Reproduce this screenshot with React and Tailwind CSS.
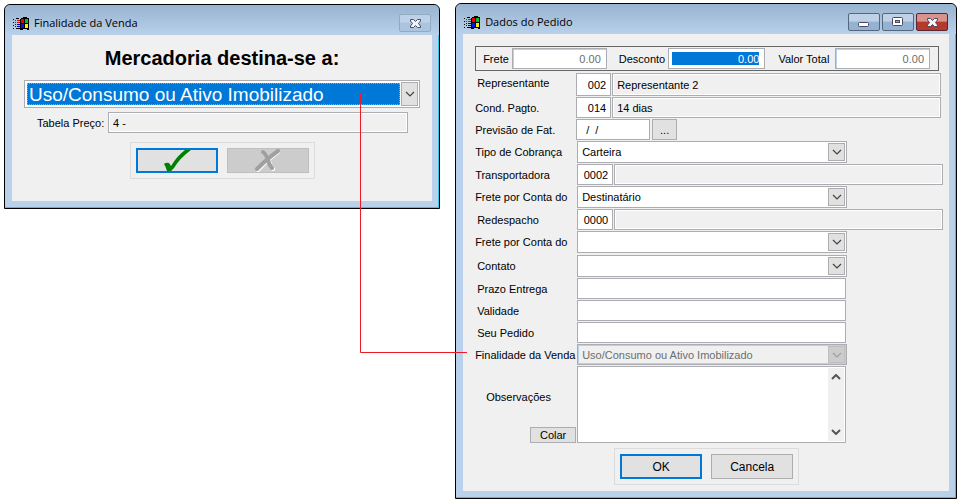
// App.jsx
import React, { useState } from 'react';
import clsx from 'clsx';

const WindowsFlag = () => (
  <svg className="shrink-0" width="17" height="15" viewBox="0 0 17 15" shapeRendering="crispEdges" aria-hidden="true">
    <path d="M8 2h2V1h4v1h2v12h-2v-1h-4v1H7V3h1z" fill="#000" />
    <path d="M8 3h3v4H8z" fill="#e8000d" />
    <path d="M12 3h3v4h-3z" fill="#00c020" />
    <path d="M8 8h3v4H8z" fill="#0018f0" />
    <path d="M12 8h3v4h-3z" fill="#ffee00" />
    <path d="M0 3h1v1H0zM0 6h1v1H0zM0 9h1v1H0zM0 12h1v1H0zM3 2h3v1H3zM3 12h4v1H3z" fill="#000" />
    <path d="M2 4h1v1H2zM4 4h3v1H4zM2 6h1v1H2zM4 6h3v1H4z" fill="#f00000" />
    <path d="M2 8h1v1H2zM4 8h3v1H4zM2 10h1v1H2zM4 10h3v1H4z" fill="#0000f0" />
  </svg>
);

const CloseGlyph = () => (
  <svg width="13" height="11" viewBox="0 0 13 11" aria-hidden="true">
    <path
      d="M1.500 1.500h3l2 2 2-2h3V3L9.500 5.500l2 2.500v1.500h-3l-2-2-2 2h-3V8l2-2.500L1.500 3z"
      fill="#f4f4f4"
      stroke="#474a66"
    />
  </svg>
);

const MinimizeGlyph = () => (
  <svg width="14" height="12" viewBox="0 0 14 12" aria-hidden="true">
    <rect x="1.500" y="6.500" width="10" height="4" rx="1" fill="#fff" stroke="#474a66" />
  </svg>
);

const MaximizeGlyph = () => (
  <svg width="14" height="12" viewBox="0 0 14 12" aria-hidden="true">
    <rect x="1.500" y="1.500" width="10" height="8" rx="1" fill="#fff" stroke="#474a66" />
    <rect x="4.500" y="4.500" width="4" height="2" fill="#8fb0d5" stroke="#474a66" />
  </svg>
);

const Chevron = ({ up = false, bold = false }) => (
  <svg width="10" height="6" viewBox="0 0 10 6" aria-hidden="true">
    <path
      d={up ? 'M1 5l4-4 4 4' : 'M1 1l4 4 4-4'}
      fill="none"
      stroke="currentColor"
      strokeWidth={bold ? 2 : 1.2}
    />
  </svg>
);

const Window = ({ title, controls, className, children }) => (
  <section
    className={clsx(
      'min-w-0 rounded-t-md border border-black bg-[#b9d1ea] shadow-[inset_-1px_-1px_0_#35c5e5]',
      className
    )}
  >
    <header className="flex h-[30px] items-center gap-1 rounded-t-md bg-linear-to-b from-[#98b3d0] to-[#b9d1ea] pt-1.5 pr-2 pl-2">
      <WindowsFlag />
      <h1 className="flex-1 truncate font-['Open_Sans',sans-serif] text-[11px]/4 text-black">{title}</h1>
      {controls}
    </header>
    <div className="mx-[7px] mb-[7px] bg-[#f0f0f0]">{children}</div>
  </section>
);

const TitleButton = ({ label, danger, flat, children }) => (
  <button
    type="button"
    aria-label={label}
    className={clsx(
      'flex h-[18px] w-8 items-center justify-center rounded-xs border',
      danger && 'border-[#5a2433] bg-linear-to-b from-[#d9938c] from-45% to-[#b33a2c] to-50%',
      flat && 'border-[#92a9c4] bg-linear-to-b from-[#bdd2e8] from-45% to-[#abc4df] to-50%',
      !danger && !flat && 'border-[#54677f] bg-linear-to-b from-[#bed1e6] from-45% to-[#95b2d2] to-50%'
    )}
  >
    {children}
  </button>
);

const box = 'min-w-0 border border-[#abadb3]';

const Row = ({ label, htmlFor, pad, className, children }) => (
  <div className={clsx('flex items-center', className)}>
    <label htmlFor={htmlFor} className={clsx('w-[101px] shrink-0 whitespace-nowrap', pad)}>
      {label}
    </label>
    {children}
  </div>
);

const Combo = ({ id, options = [''], disabled }) => (
  <div
    className={clsx(
      box,
      'mr-[102px] ml-px flex flex-1 p-px',
      disabled ? 'h-[21px] bg-[#f0f0f0] shadow-[inset_0_0_0_1px_#b5d1ee]' : 'h-[22px] bg-white'
    )}
  >
    <select
      id={id}
      disabled={disabled}
      className="min-w-0 flex-1 appearance-none bg-transparent pl-[3px] outline-none disabled:text-[#6d6d6d] disabled:opacity-100"
    >
      {options.map((option) => (
        <option key={option}>{option}</option>
      ))}
    </select>
    <span
      className={clsx(
        'pointer-events-none flex w-[17px] items-center justify-center border',
        disabled ? 'border-[#bfbfbf] bg-[#ccc] text-[#a0a0a0]' : 'border-[#adadad] bg-[#e1e1e1] text-[#444]'
      )}
    >
      <Chevron />
    </span>
  </div>
);

// Code box followed by its read-only description
const Lookup = ({ id, code, name, wide, className }) => (
  <>
    <input
      id={id}
      defaultValue={code}
      className={clsx(box, 'bg-white pr-1 text-right', wide ? 'ml-px w-9' : 'w-[35px]', className)}
    />
    <input
      readOnly
      aria-label={`Descrição ${id}`}
      defaultValue={name}
      className={clsx(
        box,
        'ml-px flex-1 bg-[#f0f0f0] pl-1 shadow-[inset_0_0_0_1px_#fff]',
        wide ? 'mr-1.5' : 'mr-2',
        className
      )}
    />
  </>
);

const SaleDialog = () => {
  const [purpose, setPurpose] = useState('Uso/Consumo ou Ativo Imobilizado');

  return (
    <Window
      title="Finalidade da Venda"
      className="mt-px flex-[436]"
      controls={
        <TitleButton label="Fechar" flat>
          <CloseGlyph />
        </TitleButton>
      }
    >
      <div className="px-3 pt-2 pb-[22px]">
        <h2 className="text-center text-[20px]/[30px] font-bold">Mercadoria destina-se a:</h2>
        <div className="mt-[7px] flex h-7 border border-[#abadb3] bg-white p-px">
          <select
            aria-label="Mercadoria destina-se a"
            value={purpose}
            onChange={(e) => setPurpose(e.target.value)}
            className="m-px min-w-0 flex-1 appearance-none border border-dotted border-[#ff8728] bg-[#0078d7] pl-px text-[19px]/[22px] text-white outline-none"
          >
            <option>Uso/Consumo ou Ativo Imobilizado</option>
            <option>Revenda</option>
          </select>
          <span className="pointer-events-none flex w-[17px] items-center justify-center border border-[#adadad] bg-[#e1e1e1] text-[#444]">
            <Chevron />
          </span>
        </div>
        <div className="mt-1 flex items-center pr-3">
          <label htmlFor="tabela" className="w-[84px] pl-[13px] whitespace-nowrap">
            Tabela Preço:
          </label>
          <input
            id="tabela"
            readOnly
            defaultValue="4 -"
            className={clsx(box, 'h-[21px] flex-1 pl-1 shadow-[inset_0_0_0_1px_#fff]')}
          />
        </div>
        <div className="mx-auto mt-[9px] flex w-fit gap-[9px] border border-[#dcdcdc] p-[5px]">
          <button
            type="button"
            aria-label="Confirmar"
            className="flex h-[25px] w-[82px] items-center justify-center border-2 border-[#0078d7] bg-[#e1e1e1]"
          >
            <svg width="28" height="21" viewBox="0 0 28 21" aria-hidden="true">
              <path d="M1 14q2-2 5-1l2 3Q14 6 22 0h6Q17 8 11 18l-3 3H4Q3 17 1 14z" fill="#008000" />
            </svg>
          </button>
          <button
            type="button"
            disabled
            aria-label="Cancelar"
            className="flex h-[25px] w-[82px] items-center justify-center border border-[#bfbfbf] bg-[#ccc]"
          >
            <svg width="27" height="23" viewBox="0 0 27 23" aria-hidden="true">
              <g fill="none" strokeLinecap="round">
                <path d="M10 4q4 3 5 8t4 8M24 3Q14 10 4 21" stroke="#fff" strokeWidth="4" />
                <path d="M9 3q4 3 5 8t4 8M24 2Q14 9 3 20" stroke="#a0a0a0" strokeWidth="4" />
              </g>
            </svg>
          </button>
        </div>
      </div>
    </Window>
  );
};

const OrderDialog = () => (
  <Window
    title="Dados do Pedido"
    className="flex-[502]"
    controls={
      <div className="flex gap-0.5">
        <TitleButton label="Minimizar">
          <MinimizeGlyph />
        </TitleButton>
        <TitleButton label="Maximizar">
          <MaximizeGlyph />
        </TitleButton>
        <TitleButton label="Fechar" danger>
          <CloseGlyph />
        </TitleButton>
      </div>
    }
  >
    <form className="pt-3 pb-1.5" onSubmit={(e) => e.preventDefault()}>
      <div className="mr-[10px] ml-3 flex items-center border border-[#666] py-px pr-2 pl-[7px]">
        <label htmlFor="frete" className="w-[29px]">Frete</label>
        <input id="frete" disabled defaultValue="0.00" className={clsx(box, 'h-[21px] w-24 flex-1 bg-white pr-[5px] text-right text-[#6d6d6d] shadow-[inset_1px_1px_0_#b5d1ee]')} />
        <label htmlFor="desconto" className="w-[61px] pl-3">Desconto</label>
        <div className={clsx(box, 'h-[21px] w-24 flex-1 bg-white py-[3px] pr-[5px] pl-[3px]')}>
          <input id="desconto" defaultValue="0.00" className="block h-[13px] w-full bg-[#0078d7] text-right text-white outline-none" />
        </div>
        <label htmlFor="total" className="w-[70px] pl-[13px] whitespace-nowrap">Valor Total</label>
        <input id="total" disabled defaultValue="0.00" className={clsx(box, 'h-[21px] w-24 flex-1 bg-white pr-[5px] text-right text-[#6d6d6d] shadow-[inset_1px_1px_0_#b5d1ee]')} />
      </div>

      <div className="mt-0.5 flex flex-col gap-px pl-3">
        <Row label="Representante" htmlFor="representante" pad="pl-0.5 pb-1">
          <Lookup id="representante" code="002" name="Representante 2" className="h-[23px]" />
        </Row>
        <Row label="Cond. Pagto." htmlFor="pagto">
          <Lookup id="pagto" code="014" name="14 dias" className="h-[21px]" />
        </Row>
        <Row label="Previsão de Fat." htmlFor="previsao">
          <input id="previsao" defaultValue="/  /" className={clsx(box, 'h-[21px] w-[74px] bg-white pl-[9px] whitespace-pre')} />
          <button type="button" aria-label="Escolher data" className="ml-0.5 h-[21px] w-[25px] border border-[#adadad] bg-[#e1e1e1]">
            ...
          </button>
        </Row>
        <Row label="Tipo de Cobrança" htmlFor="cobranca">
          <Combo id="cobranca" options={['Carteira']} />
        </Row>
        <Row label="Transportadora" htmlFor="transportadora">
          <Lookup id="transportadora" code="0002" name="" wide className="h-[21px]" />
        </Row>
        <Row label="Frete por Conta do" htmlFor="conta1">
          <Combo id="conta1" options={['Destinatário']} />
        </Row>
        <Row label="Redespacho" htmlFor="redespacho" pad="pl-0.5">
          <Lookup id="redespacho" code="0000" name="" wide className="h-[21px]" />
        </Row>
        <Row label="Frete por Conta do" htmlFor="conta2">
          <Combo id="conta2" />
        </Row>
        <Row label="Contato" htmlFor="contato" pad="pl-0.5" className="mt-px">
          <Combo id="contato" />
        </Row>
        <Row label="Prazo Entrega" htmlFor="prazo" pad="pl-0.5">
          <input id="prazo" className={clsx(box, 'mr-[103px] ml-px h-[21px] flex-1 bg-white pl-1')} />
        </Row>
        <Row label="Validade" htmlFor="validade" pad="pl-0.5">
          <input id="validade" className={clsx(box, 'mr-[103px] ml-px h-[21px] flex-1 bg-white pl-1')} />
        </Row>
        <Row label="Seu Pedido" htmlFor="pedido" pad="pl-0.5">
          <input id="pedido" className={clsx(box, 'mr-[103px] ml-px h-[21px] flex-1 bg-white pl-1')} />
        </Row>
        <Row label="Finalidade da Venda" htmlFor="finalidade">
          <Combo id="finalidade" options={['Uso/Consumo ou Ativo Imobilizado']} disabled />
        </Row>
        <div className="flex h-[77px]">
          <div className="flex w-[101px] shrink-0 flex-col items-end justify-between pt-6">
            <label htmlFor="obs" className="w-full pl-[11px]">Observações</label>
            <button type="button" className="h-4 w-[46px] border border-[#adadad] bg-[#e1e1e1] leading-3">
              Colar
            </button>
          </div>
          <div className={clsx(box, 'mr-[103px] ml-px flex flex-1 bg-white p-px')}>
            <textarea id="obs" className="min-w-0 flex-1 resize-none overflow-hidden pl-1 outline-none" />
            <div className="flex w-4 flex-col items-center justify-between bg-[#f0f0f0] py-1.5 text-[#555]">
              <button type="button" aria-label="Rolar para cima"><Chevron up bold /></button>
              <button type="button" aria-label="Rolar para baixo"><Chevron bold /></button>
            </div>
          </div>
        </div>
      </div>

      <div className="mt-[5px] ml-[151px] flex w-fit gap-[9px] border border-[#dcdcdc] p-[5px] text-[12px]">
        <button type="submit" className="h-[25px] w-[82px] border-2 border-[#0078d7] bg-[#e1e1e1]">OK</button>
        <button type="button" className="h-[25px] w-[82px] border border-[#adadad] bg-[#e1e1e1]">Cancela</button>
      </div>
    </form>
  </Window>
);

const App = () => (
  <main className="relative flex min-h-screen items-start gap-[15px] bg-white pt-[3px] pr-[3px] pl-1 font-['Liberation_Sans',Arial,sans-serif] text-[11px]/[14px] text-black">
    <SaleDialog />
    <OrderDialog />
    {/* Links the chosen purpose to the field it fills in */}
    <svg className="pointer-events-none absolute top-[94px] left-[360px]" width="108" height="260" aria-hidden="true">
      <path d="M.5 0v258.500H107" fill="none" stroke="#ed1c24" />
    </svg>
  </main>
);

export default App;
